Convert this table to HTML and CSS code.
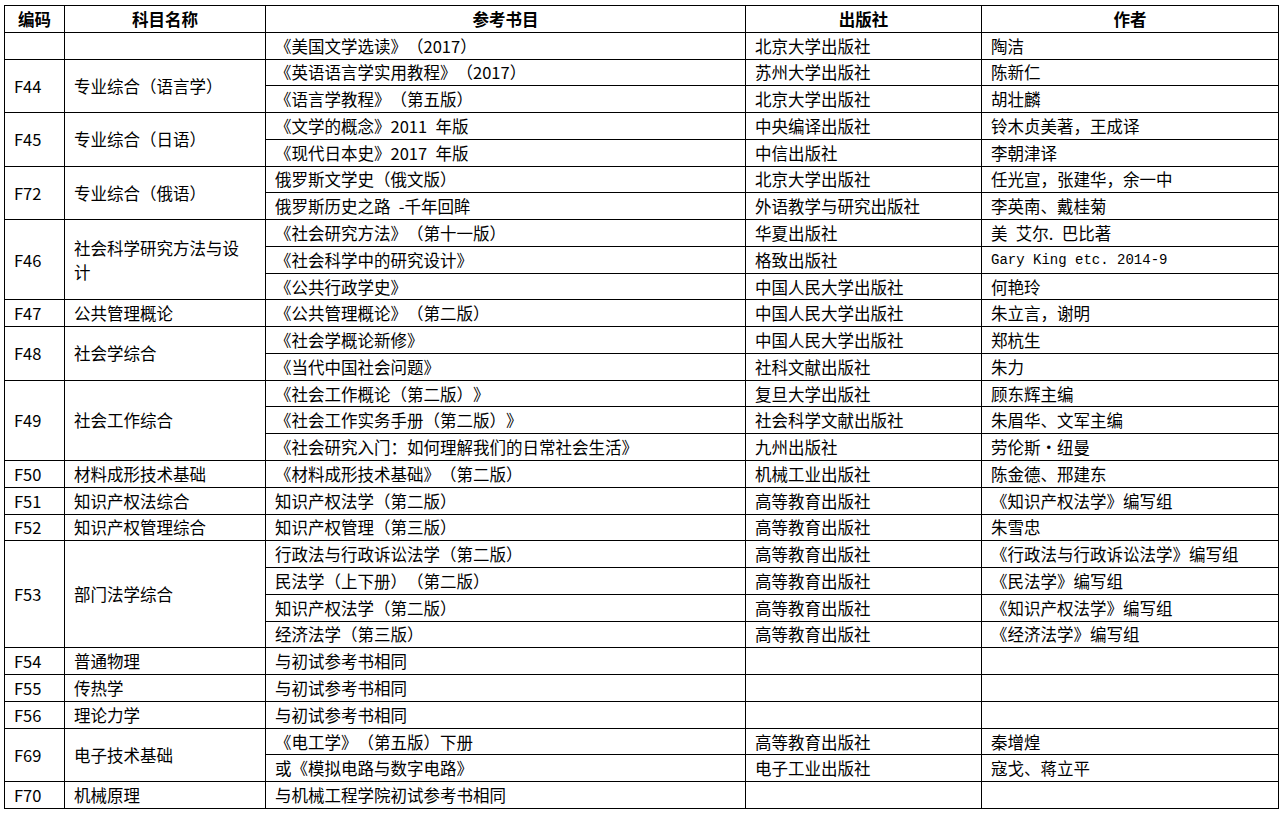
FILE: index.html
```html
<!DOCTYPE html>
<html lang="zh-CN">
<head>
<meta charset="utf-8">
<title>参考书目</title>
<link rel="stylesheet" href="styles.css">
</head>
<body>
<table class="books">
  <colgroup>
    <col class="c-code">
    <col class="c-name">
    <col class="c-book">
    <col class="c-pub">
    <col class="c-author">
  </colgroup>
  <thead>
    <tr><th>编码</th><th>科目名称</th><th>参考书目</th><th>出版社</th><th>作者</th></tr>
  </thead>
  <tbody>
    <tr><td></td><td class="name"></td><td>《美国文学选读》（2017）</td><td>北京大学出版社</td><td>陶洁</td></tr>
    <tr><td rowspan="2">F44</td><td rowspan="2" class="name">专业综合（语言学）</td><td>《英语语言学实用教程》（2017）</td><td>苏州大学出版社</td><td>陈新仁</td></tr>
    <tr><td>《语言学教程》（第五版）</td><td>北京大学出版社</td><td>胡壮麟</td></tr>
    <tr><td rowspan="2">F45</td><td rowspan="2" class="name">专业综合（日语）</td><td>《文学的概念》2011 年版</td><td>中央编译出版社</td><td>铃木贞美著，王成译</td></tr>
    <tr><td>《现代日本史》2017 年版</td><td>中信出版社</td><td>李朝津译</td></tr>
    <tr><td rowspan="2">F72</td><td rowspan="2" class="name">专业综合（俄语）</td><td>俄罗斯文学史（俄文版）</td><td>北京大学出版社</td><td>任光宣，张建华，余一中</td></tr>
    <tr><td>俄罗斯历史之路 -千年回眸</td><td>外语教学与研究出版社</td><td>李英南、戴桂菊</td></tr>
    <tr><td rowspan="3">F46</td><td rowspan="3" class="name">社会科学研究方法与设计</td><td>《社会研究方法》（第十一版）</td><td>华夏出版社</td><td>美 艾尔. 巴比著</td></tr>
    <tr><td>《社会科学中的研究设计》</td><td>格致出版社</td><td class="mono">Gary King etc. 2014-9</td></tr>
    <tr><td>《公共行政学史》</td><td>中国人民大学出版社</td><td>何艳玲</td></tr>
    <tr><td>F47</td><td class="name">公共管理概论</td><td>《公共管理概论》（第二版）</td><td>中国人民大学出版社</td><td>朱立言，谢明</td></tr>
    <tr><td rowspan="2">F48</td><td rowspan="2" class="name">社会学综合</td><td>《社会学概论新修》</td><td>中国人民大学出版社</td><td>郑杭生</td></tr>
    <tr><td>《当代中国社会问题》</td><td>社科文献出版社</td><td>朱力</td></tr>
    <tr><td rowspan="3">F49</td><td rowspan="3" class="name">社会工作综合</td><td>《社会工作概论（第二版）》</td><td>复旦大学出版社</td><td>顾东辉主编</td></tr>
    <tr><td>《社会工作实务手册（第二版）》</td><td>社会科学文献出版社</td><td>朱眉华、文军主编</td></tr>
    <tr><td>《社会研究入门：如何理解我们的日常社会生活》</td><td>九州出版社</td><td>劳伦斯·纽曼</td></tr>
    <tr><td>F50</td><td class="name">材料成形技术基础</td><td>《材料成形技术基础》（第二版）</td><td>机械工业出版社</td><td>陈金德、邢建东</td></tr>
    <tr><td>F51</td><td class="name">知识产权法综合</td><td>知识产权法学（第二版）</td><td>高等教育出版社</td><td>《知识产权法学》编写组</td></tr>
    <tr><td>F52</td><td class="name">知识产权管理综合</td><td>知识产权管理（第三版）</td><td>高等教育出版社</td><td>朱雪忠</td></tr>
    <tr><td rowspan="4">F53</td><td rowspan="4" class="name">部门法学综合</td><td>行政法与行政诉讼法学（第二版）</td><td>高等教育出版社</td><td>《行政法与行政诉讼法学》编写组</td></tr>
    <tr><td>民法学（上下册）（第二版）</td><td>高等教育出版社</td><td>《民法学》编写组</td></tr>
    <tr><td>知识产权法学（第二版）</td><td>高等教育出版社</td><td>《知识产权法学》编写组</td></tr>
    <tr><td>经济法学（第三版）</td><td>高等教育出版社</td><td>《经济法学》编写组</td></tr>
    <tr><td>F54</td><td class="name">普通物理</td><td>与初试参考书相同</td><td></td><td></td></tr>
    <tr><td>F55</td><td class="name">传热学</td><td>与初试参考书相同</td><td></td><td></td></tr>
    <tr><td>F56</td><td class="name">理论力学</td><td>与初试参考书相同</td><td></td><td></td></tr>
    <tr><td rowspan="2">F69</td><td rowspan="2" class="name">电子技术基础</td><td>《电工学》（第五版）下册</td><td>高等教育出版社</td><td>秦增煌</td></tr>
    <tr><td>或《模拟电路与数字电路》</td><td>电子工业出版社</td><td>寇戈、蒋立平</td></tr>
    <tr><td>F70</td><td class="name">机械原理</td><td>与机械工程学院初试参考书相同</td><td></td><td></td></tr>
  </tbody>
</table>
</body>
</html>
```

FILE: styles.css
```css
html, body {
  margin: 0;
  padding: 0;
  background: #fff;
}

body {
  padding: 5px 0 0 4px;
  font-family: "Noto Sans CJK SC", "Noto Sans", sans-serif;
  font-size: 16.5px;
  color: #000;
  text-spacing-trim: space-all;
  word-spacing: 0.28em;
}

.books {
  border-collapse: collapse;
  table-layout: fixed;
  width: 1274px;
}

.c-code { width: 60px; }
.c-name { width: 201px; }
.c-book { width: 480px; }
.c-pub { width: 236px; }
.c-author { width: 297px; }

.books th,
.books td {
  border: 1px solid #000;
  height: 26.78px;
  padding: 0 9px;
  line-height: 24px;
  vertical-align: middle;
  text-align: left;
  white-space: nowrap;
  overflow: hidden;
  box-sizing: border-box;
  text-spacing-trim: space-all;
}

.books th {
  font-weight: 700;
  text-align: center;
}

.books td.name {
  white-space: normal;
  padding-right: 10px;
}

.books td.mono {
  font-family: "Liberation Mono", "DejaVu Sans Mono", monospace;
  font-size: 14px;
  word-spacing: 0;
}
```
